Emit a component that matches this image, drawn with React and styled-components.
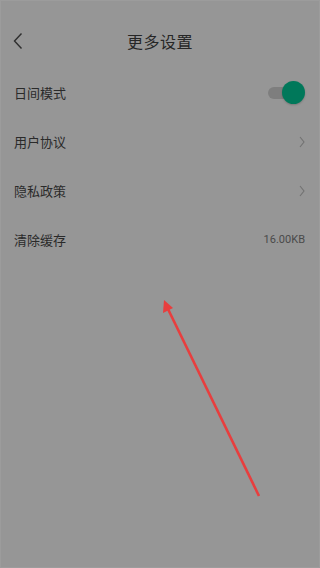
import React from 'react';
import styled, { createGlobalStyle } from 'styled-components';

const GlobalStyle = createGlobalStyle`
  html, body {
    margin: 0;
    padding: 0;
    background: #969696;
  }
  * {
    box-sizing: border-box;
  }
`;

export default function App() {
  const rows = [
    { label: '日间模式', kind: 'toggle' },
    { label: '用户协议', kind: 'link' },
    { label: '隐私政策', kind: 'link' },
    { label: '清除缓存', kind: 'value', value: '16.00KB' },
  ];

  return (
    <Page>
      <GlobalStyle />
      <Header>
        <BackButton aria-label="back">
          <svg width="10" height="18" viewBox="0 0 10 18">
            <path d="M8.5 1.5 L1.5 9 L8.5 16.5" fill="none" stroke="#2e2e2e" strokeWidth="1.4" />
          </svg>
        </BackButton>
        <Title>更多设置</Title>
      </Header>
      <List>
        {rows.map(r => (
          <Row key={r.label}>
            <Label>{r.label}</Label>
            {r.kind === 'toggle' && (
              <Toggle>
                <Track />
                <Thumb />
              </Toggle>
            )}
            {r.kind === 'link' && (
              <svg width="6" height="12" viewBox="0 0 6 12">
                <path d="M1 1 L5 6 L1 11" fill="none" stroke="#727272" strokeWidth="1.1" />
              </svg>
            )}
            {r.kind === 'value' && <Value>{r.value}</Value>}
          </Row>
        ))}
      </List>
      <Arrow width="320" height="568" viewBox="0 0 320 568">
        <line x1="258" y1="495" x2="166" y2="306" stroke="#e83e3e" strokeWidth="2.6" />
        <path d="M163 299 L162 312 L172 307 Z" fill="#e83e3e" />
      </Arrow>
    </Page>
  );
}

const Page = styled.div`
  position: relative;
  width: 320px;
  height: 568px;
  background: #969696;
  border: 1px solid #9c9c9c;
  font-family: "Noto Sans CJK SC", Roboto, "Liberation Sans", sans-serif;
  overflow: hidden;
`;

const Header = styled.div`
  position: relative;
  height: 67px;
  padding-top: 12px;
  display: flex;
  align-items: center;
  justify-content: center;
`;

const BackButton = styled.div`
  position: absolute;
  left: 12px;
  top: 31px;
  display: flex;
`;

const Title = styled.div`
  font-size: 16px;
  color: #262626;
  letter-spacing: 0.5px;
`;

const List = styled.div`
  display: flex;
  flex-direction: column;
`;

const Row = styled.div`
  height: 49px;
  display: flex;
  align-items: center;
  justify-content: space-between;
  padding: 0 14px 0 13px;
`;

const Label = styled.div`
  font-size: 13px;
  color: #2a2a2a;
`;

const Value = styled.div`
  font-family: Roboto, "Liberation Sans", sans-serif;
  font-size: 11px;
  color: #4a4a4a;
`;

const Toggle = styled.div`
  position: relative;
  width: 38px;
  height: 24px;
  margin-right: -1px;
`;

const Track = styled.div`
  position: absolute;
  left: 0;
  top: 6px;
  width: 30px;
  height: 12px;
  border-radius: 6px;
  background: #7e7e7e;
`;

const Thumb = styled.div`
  position: absolute;
  left: 14px;
  top: 0;
  width: 23px;
  height: 23px;
  border-radius: 50%;
  background: #00785a;
  box-shadow: 0 1px 2px rgba(0, 0, 0, 0.2);
`;

const Arrow = styled.svg`
  position: absolute;
  left: 0;
  top: 0;
  pointer-events: none;
`;
